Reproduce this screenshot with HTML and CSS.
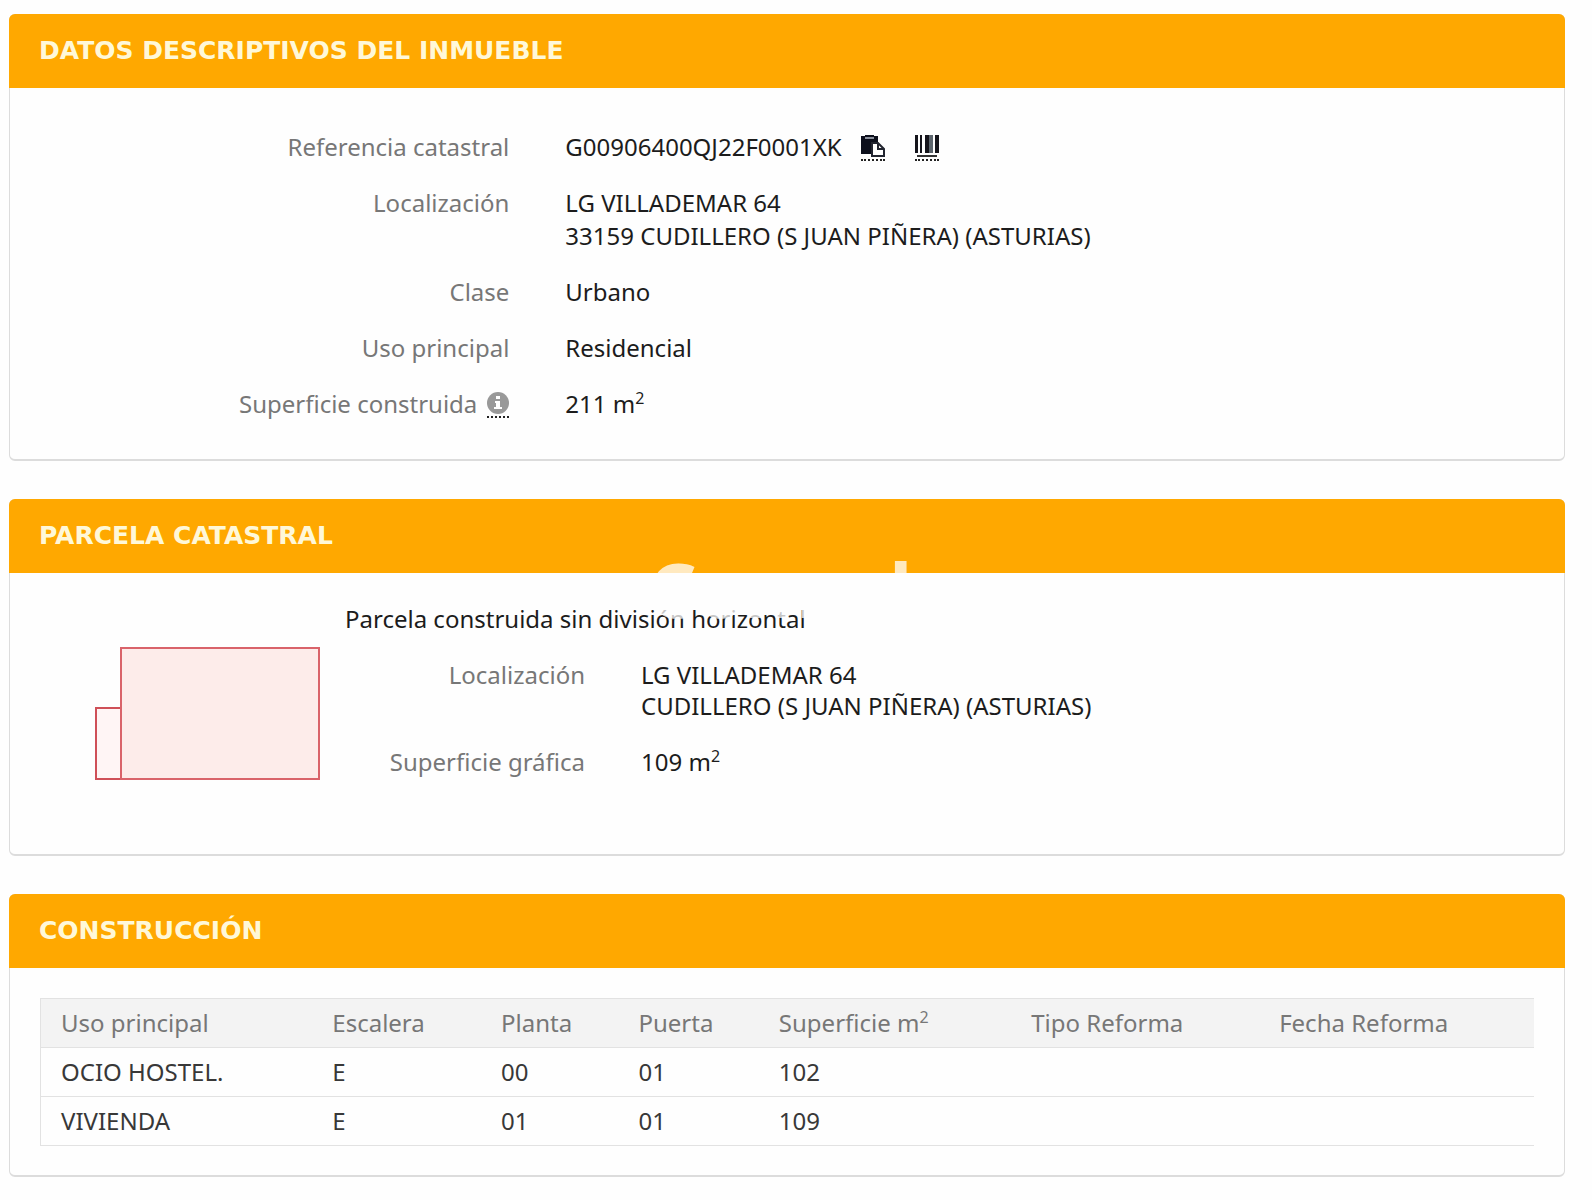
FILE: index.html
```
<!DOCTYPE html>
<html lang="es">
<head>
  <meta charset="UTF-8">
  <meta name="viewport" content="width=device-width, initial-scale=1.0">
  <title>Datos descriptivos del inmueble</title>
  <link rel="stylesheet" href="styles.css">
</head>
<body>
  <section class="panel">
    <h2 class="panel-heading">DATOS DESCRIPTIVOS DEL INMUEBLE</h2>
    <dl class="datos datos-inmueble">
      <dt>Referencia catastral</dt>
      <dd class="referencia">
        <span>G00906400QJ22F0001XK</span>
        <button class="icono" type="button" aria-label="Copiar referencia">
          <svg width="24" height="22" viewBox="0 0 24 22">
            <path fill="#0c0f1c" d="M0 1h4V0h9v1h4v6h-6v12H0z"/>
            <path fill="#8b909c" d="M4 2h9v2H4z"/>
            <path fill="#fff" stroke="#222530" stroke-width="2" d="M11 8h6l6 6v7H11z"/>
            <path fill="none" stroke="#222530" stroke-width="2" d="M17 8v6h6"/>
          </svg>
        </button>
        <button class="icono" type="button" aria-label="Código de barras">
          <svg width="24" height="22" viewBox="0 0 24 22">
            <path fill="#15151c" d="M0 0h3v18H0zM5 0h2v18H5zM10 0h4v18h-4zM20 0h4v18h-4z"/>
            <path fill="#5d666e" d="M14 0h4v18h-4z"/>
            <path fill="#333" d="M2 20h20v2H2z"/>
          </svg>
        </button>
      </dd>
      <dt>Localización</dt>
      <dd>LG VILLADEMAR 64<br>33159 CUDILLERO (S JUAN PIÑERA) (ASTURIAS)</dd>
      <dt>Clase</dt>
      <dd>Urbano</dd>
      <dt>Uso principal</dt>
      <dd>Residencial</dd>
      <dt class="con-info">
        <span>Superficie construida</span>
        <button class="icono" type="button" aria-label="Información">
          <svg width="22" height="22" viewBox="0 0 22 22">
            <circle cx="11" cy="11" r="11" fill="#999"/>
            <path fill="#fff" d="M9 4h4v3H9zM8 9h5v6h2v2H7v-2h2v-4H8z"/>
          </svg>
        </button>
      </dt>
      <dd>211 m<sup>2</sup></dd>
    </dl>
  </section>

  <section class="panel">
    <h2 class="panel-heading">PARCELA CATASTRAL</h2>
    <div class="parcela">
      <svg class="croquis" width="226" height="134" viewBox="0 0 226 134">
        <path fill="#fff5f5" stroke="#cf5058" stroke-width="2" d="M1 61h25v71H1z"/>
        <path fill="#fdecea" stroke="#d9636a" stroke-width="2" d="M26 1h198v131H26z"/>
      </svg>
      <div>
        <p class="tipo">Parcela construida sin división horizontal</p>
        <dl class="datos datos-parcela">
          <dt>Localización</dt>
          <dd>LG VILLADEMAR 64<br>CUDILLERO (S JUAN PIÑERA) (ASTURIAS)</dd>
          <dt>Superficie gráfica</dt>
          <dd>109 m<sup>2</sup></dd>
        </dl>
      </div>
    </div>
    <span class="marca" aria-hidden="true">Comad</span>
  </section>

  <section class="panel">
    <h2 class="panel-heading">CONSTRUCCIÓN</h2>
    <div class="construccion">
      <table>
        <colgroup>
          <col class="c-uso"><col class="c-escalera"><col class="c-planta"><col class="c-puerta"><col class="c-superficie"><col class="c-tipo"><col>
        </colgroup>
        <thead>
          <tr>
            <th>Uso principal</th>
            <th>Escalera</th>
            <th>Planta</th>
            <th>Puerta</th>
            <th>Superficie m<sup>2</sup></th>
            <th>Tipo Reforma</th>
            <th>Fecha Reforma</th>
          </tr>
        </thead>
        <tbody>
          <tr><td>OCIO HOSTEL.</td><td>E</td><td>00</td><td>01</td><td>102</td><td></td><td></td></tr>
          <tr><td>VIVIENDA</td><td>E</td><td>01</td><td>01</td><td>109</td><td></td><td></td></tr>
        </tbody>
      </table>
    </div>
  </section>
</body>
</html>
```
FILE: styles.css
```
* {
  box-sizing: border-box;
}

body {
  margin: 0;
  padding: 14px 27px 24px 9px;
  background: #fefefe;
  color: #1c1c1c;
  font-family: "Noto Sans", Verdana, sans-serif;
  font-size: 24px;
  line-height: 32px;
}

.panel {
  position: relative;
  margin-bottom: 38px;
  border: 1px solid #dcdcdc;
  border-bottom-width: 2px;
  border-radius: 6px;
  background: #fefefe;
}

.panel-heading {
  margin: -1px -1px 0;
  padding: 21px 30px;
  border-radius: 6px 6px 0 0;
  background: #ffa800;
  color: #fff8d8;
  font-family: "DejaVu Sans", Verdana, sans-serif;
  font-size: 25px;
  line-height: 32px;
}

.datos {
  display: grid;
  column-gap: 56px;
  margin: 0;
}

.datos dt {
  color: #777;
  text-align: right;
}

.datos dd {
  margin: 0;
}

.datos-inmueble {
  grid-template-columns: 1fr 2fr;
  row-gap: 23px;
  padding: 42px 0 39px;
  line-height: 33px;
}

.datos-parcela {
  grid-template-columns: 240px 1fr;
  row-gap: 25px;
  line-height: 31px;
}

sup {
  font-size: 16px;
  line-height: 0;
}

.referencia {
  display: flex;
  align-items: center;
}

.con-info {
  display: flex;
  align-items: center;
  justify-content: flex-end;
  gap: 10px;
}

.icono {
  display: block;
  height: 28px;
  padding: 0;
  border: 0;
  border-bottom: 2px dotted #222;
  background: none;
}

.icono svg {
  display: block;
}

.referencia .icono {
  margin-left: 19px;
}

.referencia .icono + .icono {
  margin-left: 30px;
}

/* faded stamp over the heading and the text below it */
.marca {
  position: absolute;
  top: 49px;
  left: 638px;
  color: #fff;
  font-size: 76px;
  font-weight: 700;
  line-height: 80px;
  opacity: 0.75;
  pointer-events: none;
}

.parcela {
  display: flex;
  gap: 24px;
  padding: 30px 30px 73px 85px;
}

.croquis {
  flex: none;
  margin-top: 44px;
}

.tipo {
  margin: 0 0 24px;
}

.construccion {
  padding: 30px 30px 29px;
}

table {
  width: 100%;
  table-layout: fixed;
  border-collapse: collapse;
  border-left: 1px solid #e2e2e2;
}

th,
td {
  height: 49px;
  padding: 0 20px;
  border-top: 1px solid #e2e2e2;
  border-bottom: 1px solid #e2e2e2;
  text-align: left;
  white-space: nowrap;
}

th {
  background: #f3f3f3;
  color: #777;
  font-weight: normal;
}

td {
  color: #383838;
}

.c-uso {
  width: 18.2%;
}

.c-escalera {
  width: 11.3%;
}

.c-planta {
  width: 9.2%;
}

.c-puerta {
  width: 9.4%;
}

.c-superficie {
  width: 16.9%;
}

.c-tipo {
  width: 16.6%;
}
```
